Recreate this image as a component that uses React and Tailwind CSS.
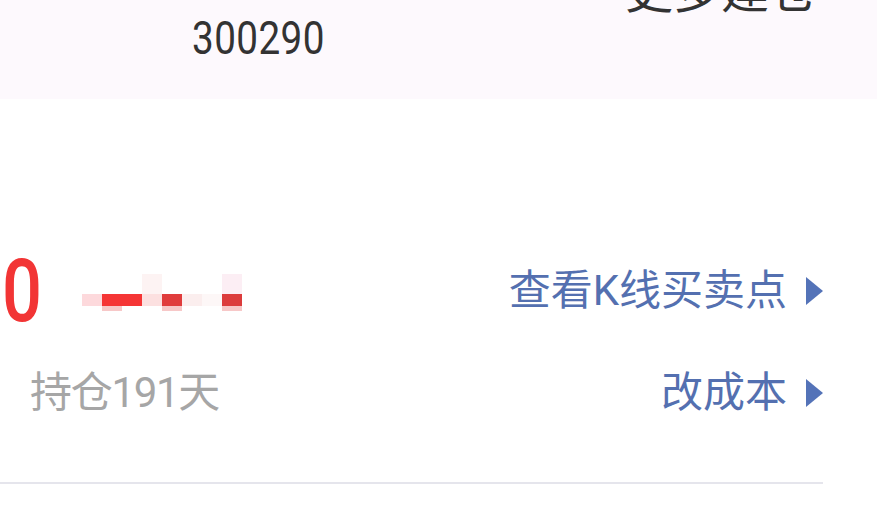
import React from "react";

const font = { fontFamily: 'Roboto, "Noto Sans CJK SC", sans-serif' };

function Tri() {
  return (
    <svg width="17" height="28" viewBox="0 0 17 28" className="shrink-0">
      <polygon points="0,0 17,14 0,28" fill="#5473b8" />
    </svg>
  );
}

function Mosaic() {
  const cols = [
    ["#ffffff", "#fdd9dc"],
    ["#ffffff", "#f53535"],
    ["#ffffff", "#f53535"],
    ["#fdf3f3", "#fce0e0"],
    ["#ffffff", "#e03c3c"],
    ["#ffffff", "#fbeeee"],
    ["#ffffff", "#fdf7f7"],
    ["#fceef4", "#dc3c3c"],
  ];
  return (
    <div className="flex ml-[40px] mt-[2px]">
      {cols.map((c, i) => (
        <div key={i} className="flex flex-col w-[20px]">
          <div className="h-[20px]" style={{ background: c[0] }} />
          <div className="h-[12px]" style={{ background: c[1] }} />
          <div className="h-[5px]" style={{ background: i === 1 || i === 4 || i === 7 ? "#f7c8c8" : "#ffffff" }} />
        </div>
      ))}
    </div>
  );
}

export default function App() {
  return (
    <div className="w-[877px] h-[507px] overflow-hidden bg-white flex flex-col" style={font}>
      <div className="h-[99px] bg-[#fdf9fd] flex justify-between shrink-0">
        <div className="pl-[192px] pt-[15px]">
          <div className="text-[46px] leading-none text-[#333333] scale-x-[0.84] origin-left tracking-[0.5px]">300290</div>
        </div>
        <div className="pr-[60px] mt-[-32px] text-[48px] leading-none text-[#333333]">更多建仓</div>
      </div>
      <div className="flex items-center justify-between h-[100px] mt-[142px] pr-[54px]">
        <div className="flex items-center pl-[2px]">
          <div className="text-[88px] font-medium leading-none text-[#f23535] scale-x-[0.8] origin-left w-[40px]">0</div>
          <Mosaic />
        </div>
        <div className="flex items-center gap-[19px]">
          <span className="text-[42px] leading-none text-[#5470b0]">查看K线买卖点</span>
          <Tri />
        </div>
      </div>
      <div className="flex items-center justify-between h-[104px] pr-[54px] pl-[30px]">
        <span className="text-[42px] leading-none text-[#a6a6a6] tracking-[-1.3px]">持仓191天</span>
        <div className="flex items-center gap-[19px]">
          <span className="text-[42px] leading-none text-[#5470b0]">改成本</span>
          <Tri />
        </div>
      </div>
      <div className="mt-[37px] w-[823px] h-[2px] bg-[#e5e5ec]" />
    </div>
  );
}
